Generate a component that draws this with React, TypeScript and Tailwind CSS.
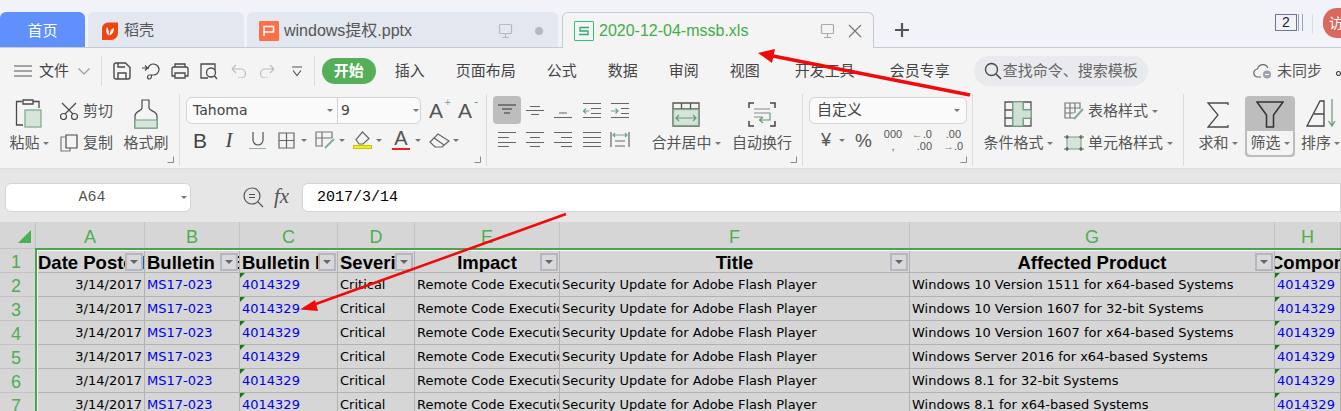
import type { ReactNode } from 'react';

const CJK = 'font-["Liberation_Sans","Noto_Sans_CJK_SC",sans-serif]';

function Ico({ w = 18, h = 18, children, className = '' }: { w?: number; h?: number; children: ReactNode; className?: string }) {
  return (
    <svg width={w} height={h} viewBox={`0 0 ${w} ${h}`} fill="none" stroke="#4a4a4a" strokeWidth="1.2" className={`shrink-0 ${className}`}>
      {children}
    </svg>
  );
}

function Caret({ className = '' }: { className?: string }) {
  return <span className={`inline-block shrink-0 w-0 h-0 border-x-[3.5px] border-x-transparent border-t-[3.5px] border-t-[#777] ${className}`} />;
}

function Sep() {
  return <div className="w-px self-stretch bg-[#dcdcdc] shrink-0" />;
}

function Corner({ right = 5 }: { right?: number }) {
  return (
    <svg width="7" height="7" viewBox="0 0 7 7" fill="none" stroke="#888" className="absolute bottom-[3px]" style={{ right }}>
      <path d="M0.5 6.5H6.5V0.5" />
    </svg>
  );
}

// big ribbon button: icon on top, label below
function BigTool({ icon, label, caret, className = '' }: { icon: ReactNode; label: string; caret?: boolean; className?: string }) {
  return (
    <div className={`shrink-0 flex flex-col items-center ${className}`}>
      <div className="h-[32px] pt-[2px] flex justify-center">{icon}</div>
      <div className="h-[28px] flex items-center gap-[3px] whitespace-nowrap">
        {label}
        {caret && <Caret />}
      </div>
    </div>
  );
}

function Tabs() {
  return (
    <div className="h-[48px] shrink-0 bg-[#f2f3f8] border-b border-[#c6c9d6] flex items-end pt-3 relative">
      <div className="w-[85px] h-[35px] pt-[3px] bg-[#5f90fb] rounded-t-md text-white text-[15px] flex items-center justify-center">首页</div>
      <div className="ml-[3px] w-[156px] h-[35px] pt-[2px] bg-[#e3e7f0] rounded-t-md flex items-center pl-[14px] gap-[6px]">
        <svg width="16" height="18" viewBox="0 0 16 18" className="shrink-0">
          <path d="M6 0.5H16V11a7 7 0 0 1-7 7H0V6.500a6 6 0 0 1 6-6Z" fill="#f0450f" />
          <path d="M5 5c-1.500 3.500-1 6.500 1.500 8.500C7.500 10 6.500 8 5 5ZM12 6c-3 1-4.500 4-4.500 7.500C10 12.500 12 10 12 6Z" fill="#fff" />
        </svg>
        <span className="text-[15px] text-[#555]">稻壳</span>
      </div>
      <div className="ml-[3px] w-[311px] h-[35px] pt-[2px] bg-[#e3e7f0] rounded-t-md flex items-center pl-[12px]">
        <div className="w-5 h-5 bg-[#fb7049] rounded-[1px] flex items-center justify-center">
          <svg width="12" height="12" viewBox="0 0 12 12" fill="none" stroke="#fff" strokeWidth="1.500">
            <path d="M1 11V1.500H10.500V7H1" />
          </svg>
        </div>
        <span className="ml-[5px] text-[16px] text-[#555] grow">windows提权.pptx</span>
        <Ico w={16} h={16} className="mr-[21px]">
          <rect x="1.500" y="1.500" width="12" height="9" rx="1" stroke="#b5b8c0" />
          <path d="M7.500 10.500V14M4 14.500H11" stroke="#b5b8c0" />
        </Ico>
        <span className="w-2 h-2 rounded-full bg-[#b5b8c0] mr-[15px]" />
      </div>
      <div className="ml-[4px] w-[312px] h-[36px] pt-[1px] -mb-px bg-[#f4f4f4] border border-b-0 border-[#c6c9d6] rounded-t-md flex items-center pl-[11px]">
        <div className="w-5 h-5 border-[1.500px] border-[#2fbf7f] rounded-[1px] flex items-center justify-center">
          <svg width="12" height="12" viewBox="0 0 12 12" fill="none" stroke="#2fa870" strokeWidth="1.300">
            <path d="M11 2.500H2V6H10V9.500H1" />
          </svg>
        </div>
        <span className="ml-[5px] text-[16px] text-[#3fae49] grow">2020-12-04-mssb.xls</span>
        <Ico w={16} h={16} className="mr-[12px]">
          <rect x="1.500" y="1.500" width="12" height="9" rx="1" stroke="#a8abb2" />
          <path d="M7.500 10.500V14M4 14.500H11" stroke="#a8abb2" />
        </Ico>
        <Ico w={14} h={14} className="mr-[11px]">
          <path d="M1 1L13 13M13 1L1 13" stroke="#777" />
        </Ico>
      </div>
      <div className="ml-[20px] h-[35px] flex items-center">
        <svg width="16" height="16" viewBox="0 0 16 16" stroke="#555" strokeWidth="2.200">
          <path d="M8 1V15M1 8H15" />
        </svg>
      </div>
      <div className="grow" />
      <div className="h-[35px] flex items-start -mt-3 self-start pt-[14px]">
        <div className="w-[22px] h-[17px] border-[1.500px] border-[#6a7690] text-[14px] leading-[14px] text-center text-[#222]">2</div>
        <div className="ml-px w-[5px] h-[17px] border-x border-[#9aa3b5]" />
        <div className="ml-[9px] w-px h-[20px] bg-[#dcdde3]" />
      </div>
      <div className="ml-[10px] w-[18px] h-[30px] bg-[#d9685d] rounded-l-[14px] text-white text-[14px] flex items-center pl-[6px] overflow-hidden self-start -mt-[4px] whitespace-nowrap">访</div>
    </div>
  );
}

function MenuRow() {
  const items: [string, number][] = [
    ['插入', 19],
    ['页面布局', 31],
    ['公式', 31],
    ['数据', 31],
    ['审阅', 31],
    ['视图', 31],
    ['开发工具', 35],
    ['会员专享', 35],
  ];
  return (
    <div className="h-[46px] shrink-0 flex items-center text-[15px] text-[#444] whitespace-nowrap">
      <Ico w={18} h={12} className="ml-[14px]">
        <path d="M0 1H18M0 6H18M0 11H18" stroke="#555" />
      </Ico>
      <span className="ml-[7px] w-[30px]">文件</span>
      <Ico w={12} h={7} className="ml-[9px]">
        <path d="M0.500 0.500L6 6L11.500 0.500" stroke="#999" />
      </Ico>
      <div className="ml-[11px] w-px h-[30px] bg-[#dcdcdc]" />
      <Ico w={18} h={18} className="ml-[11px]">
        <path d="M1 3a2 2 0 0 1 2-2h9.500L17 5.500V15a2 2 0 0 1-2 2H3a2 2 0 0 1-2-2Z M5 17V11H13V17 M5 1V5H12" strokeWidth="1.400" />
      </Ico>
      <Ico w={18} h={18} className="ml-[11px]">
        <path d="M0 6H5M3 3.500L5.500 6L3 8.500M6 7a5.500 5.500 0 1 1 5 6H7.500a2 2 0 1 0 0 4c2 0 2-2 2-4" />
      </Ico>
      <Ico w={18} h={16} className="ml-[11px]">
        <path d="M4 4V1H14V4M4 13H1V6a2 2 0 0 1 2-2H15a2 2 0 0 1 2 2V13H14M4 10H14V15H4Z" strokeWidth="1.300" />
      </Ico>
      <Ico w={20} h={17} className="ml-[11px]">
        <path d="M8 15H1V1H15V7M17 16L14.500 13" strokeWidth="1.300" />
        <circle cx="11" cy="9.500" r="4.500" strokeWidth="1.300" />
      </Ico>
      <Ico w={16} h={14} className="ml-[11px]">
        <path d="M1 5H10a4.500 4.500 0 0 1 0 9H7M1 5L5 1M1 5L5 9" stroke="#bdbdbd" />
      </Ico>
      <Ico w={16} h={14} className="ml-[12px]">
        <path d="M15 5H6a4.500 4.500 0 0 0 0 9H9M15 5L11 1M15 5L11 9" stroke="#bdbdbd" />
      </Ico>
      <Ico w={10} h={11} className="ml-[17px]">
        <path d="M0 1H10M1 4.500L5 9.500L9 4.500" stroke="#555" />
      </Ico>
      <div className="ml-[12px] w-px h-[30px] bg-[#dcdcdc]" />
      <div className="ml-[7px] w-[54px] h-[26px] rounded-full bg-[#55ae58] text-white text-center leading-[26px] font-bold text-[15px]">开始</div>
      {items.map(([label, gap]) => (
        <span key={label} style={{ marginLeft: gap }}>
          {label}
        </span>
      ))}
      <div className="ml-[24px] w-[175px] h-[30px] rounded-full bg-[#e8eaed] flex items-center pl-[10px] gap-[1px] text-[#666]">
        <Ico w={18} h={18}>
          <circle cx="7.500" cy="7.500" r="6" strokeWidth="1.400" />
          <path d="M12 12L17 17" strokeWidth="1.600" />
        </Ico>
        <span>查找命令、搜索模板</span>
      </div>
      <Ico w={20} h={16} className="ml-[105px]">
        <path d="M8 14H5a4 4 0 0 1-.5-8A5.500 5.500 0 0 1 15 5" stroke="#666" />
        <circle cx="14" cy="11.500" r="4" fill="#9aa0ab" stroke="none" />
        <path d="M12 11.500H16" stroke="#fff" />
      </Ico>
      <span className="ml-[4px] text-[#555]">未同步</span>
      <Ico w={5} h={5} className="ml-[14px] mt-[4px]">
        <circle cx="2.500" cy="2.500" r="2" />
      </Ico>
    </div>
  );
}

function Clipboard() {
  return (
    <div className="relative w-[179px] shrink-0 pt-[3px] pl-[5px] flex">
      <BigTool
        className="w-[48px]"
        caret
        label="粘贴"
        icon={
          <Ico w={28} h={29}>
            <path d="M7 2.500H1.500V26H8" strokeWidth="1.300" />
            <path d="M8 1H18V5H8ZM18 2.500H24V9" strokeWidth="1.300" />
            <rect x="10" y="11" width="16" height="17" fill="#d6e3da" stroke="#7fae8f" strokeWidth="1.300" />
          </Ico>
        }
      />
      <div className="ml-[7px] w-[53px] shrink-0 flex flex-col gap-[4px]">
        <div className="flex items-center gap-[5px] h-[28px]">
          <Ico w={18} h={18}>
            <circle cx="3.500" cy="14.500" r="3" />
            <circle cx="14.500" cy="14.500" r="3" />
            <path d="M5 12L16 1M13 12L2 1" />
          </Ico>
          剪切
        </div>
        <div className="flex items-center gap-[5px] h-[28px]">
          <Ico w={18} h={18}>
            <path d="M5 3H1V17H10V14" stroke="#777" />
            <path d="M6 1H17V14H6Z" />
          </Ico>
          复制
        </div>
      </div>
      <BigTool
        className="ml-[8px] w-[50px]"
        label="格式刷"
        icon={
          <Ico w={24} h={30}>
            <path d="M8 1H15V9C15 12 23 12 23 17V29H1V17C1 12 8 12 8 9Z" />
            <rect x="1" y="21" width="22" height="8" fill="#d8e5dc" stroke="#7fae8f" />
          </Ico>
        }
      />
      <Corner />
    </div>
  );
}

function FontGroup() {
  return (
    <div className="relative w-[306px] shrink-0 pt-[3px] pl-[6px] flex flex-col">
      <div className="flex items-center h-[27px]">
        <div className="w-[235px] h-[27px] border border-[#d4d4d4] rounded-md bg-[#fafafa] flex items-center text-[#444] font-['DejaVu_Sans'] text-[14px]">
          <span className="pl-[6px] w-[140px]">Tahoma</span>
          <Caret />
          <span className="ml-[4px] border-l border-[#d4d4d4] h-full pl-[3px] w-[76px] leading-[25px]">9</span>
          <Caret />
        </div>
        <span className="ml-[8px] relative text-[21px] text-[#555] font-['Liberation_Sans'] leading-none">
          A<span className="absolute -right-[8px] -top-[3px] text-[11px] text-[#7fae8f]">+</span>
        </span>
        <span className="ml-[15px] relative text-[21px] text-[#555] font-['Liberation_Sans'] leading-none">
          A<span className="absolute -right-[6px] -top-[4px] text-[11px] text-[#777]">-</span>
        </span>
      </div>
      <div className="flex items-center h-[28px] mt-[2px] text-[#444]">
        <span className="ml-[7px] w-[14px] text-[21px] font-['Liberation_Sans'] text-center leading-none">B</span>
        <span className="ml-[16px] w-[12px] text-[21px] font-['Liberation_Serif'] italic text-center leading-none">I</span>
        <div className="ml-[14px] w-[17px] flex flex-col items-center">
          <svg width="14" height="14" viewBox="0 0 14 14" fill="none" stroke="#555" strokeWidth="1.200">
            <path d="M2 0V8a5 5 0 0 0 10 0V0" />
          </svg>
          <div className="w-[17px] h-px bg-[#8db49a] mt-[2px]" />
        </div>
        <Ico w={17} h={17} className="ml-[12px]">
          <path d="M1 1H16V16H1ZM8.500 1V16M1 8.500H16" stroke="#666" />
        </Ico>
        <Caret className="ml-[6px]" />
        <Ico w={20} h={18} className="ml-[8px]">
          <path d="M17 7V1H1V15H8M1 7H17M7 1V15" stroke="#777" />
          <path d="M11 16L19 8M11 16L10 17" stroke="#7fae8f" strokeWidth="1.800" />
        </Ico>
        <Caret className="ml-[4px]" />
        <div className="ml-[8px] w-[19px] flex flex-col items-center">
          <Ico w={17} h={14}>
            <path d="M8.500 1L15 7.500L9 13H5L2 8.500Z" stroke="#666" />
          </Ico>
          <div className="w-[19px] h-[4px] bg-[#f5ee1e] border border-[#ccc400]" />
        </div>
        <Caret className="ml-[4px]" />
        <div className="ml-[10px] w-[18px] flex flex-col items-center">
          <span className="text-[20px] leading-[17px] font-['Liberation_Sans'] text-[#555]">A</span>
          <div className="w-[18px] h-[2px] bg-[#ee1c25] mt-px" />
        </div>
        <Caret className="ml-[5px]" />
        <Ico w={21} h={15} className="ml-[8px]">
          <path d="M1 9L9 1L20 8L13 14H6ZM5 5L15 12" stroke="#666" />
        </Ico>
        <Caret className="ml-[3px]" />
      </div>
      <Corner />
    </div>
  );
}

function AlignIcon({ pat, arrow, color = '#666' }: { pat: string; arrow?: string; color?: string }) {
  return (
    <div className="flex items-center justify-center">
      <Ico w={20} h={17}>
        <path d={pat} stroke={color} />
        {arrow && <path d={arrow} stroke="#6fa583" />}
      </Ico>
    </div>
  );
}

function AlignGroup() {
  return (
    <div className="relative w-[315px] shrink-0 pl-[6px] pt-[2px] flex text-[#555]">
      <div className="w-[141px] shrink-0 grid grid-cols-[repeat(5,28.2px)] grid-rows-[28px_31px] h-[59px]">
        <div className="rounded bg-[#bdbdbd] flex items-center justify-center">
          <Ico w={20} h={12}>
            <path d="M1 1H19M5 5H15M7 9H13" stroke="#333" />
          </Ico>
        </div>
        <AlignIcon pat="M1 8.500H19M5 4.500H15M6 12.500H14" />
        <AlignIcon pat="M1 15.500H19M6 11H14" />
        <AlignIcon pat="M1 1.500H19M9 6.500H19M9 11.500H19M1 15.500H19" arrow="M1 9H7M4 6.500L1.500 9L4 11.500" />
        <AlignIcon pat="M1 1.500H19M11 6.500H19M11 11.500H19M1 15.500H19" arrow="M1 9H8M5.500 6.500L8 9L5.500 11.500" />
        <AlignIcon pat="M1 1.500H19M1 6.500H12M1 11.500H19M1 15.500H12" />
        <AlignIcon pat="M1 1.500H19M5 6.500H15M1 11.500H19M5 15.500H15" />
        <AlignIcon pat="M1 1.500H19M8 6.500H19M1 11.500H19M8 15.500H19" />
        <AlignIcon pat="M1 1.500H19M1 6.500H19M1 11.500H19M1 15.500H19" />
        <AlignIcon pat="M1 1V16M19 1V16M5 10H15M5 15H15" arrow="M3 4H17M5 2L3 4L5 6M15 2L17 4L15 6" />
      </div>
      <div className="flex mt-px">
        <BigTool
          className="ml-[14px] w-[76px]"
          caret
          label="合并居中"
          icon={
            <Ico w={28} h={25} className="mt-[3px]">
              <path d="M1 1H27V24H1ZM1 7H27M9.500 1V7M18.500 1V7" stroke="#555" strokeWidth="1.300" />
              <rect x="1.500" y="7.500" width="25" height="16" fill="#d6e3da" stroke="#7fae8f" />
              <path d="M4 16H24M7 13L4 16L7 19M21 13L24 16L21 19" stroke="#5f9a72" />
            </Ico>
          }
        />
        <BigTool
          className="w-[76px]"
          label="自动换行"
          icon={
            <Ico w={28} h={25} className="mt-[3px]">
              <path d="M6 1H1V6M22 1H27V6M1 19V24H6M27 19V24H22" stroke="#444" strokeWidth="1.500" />
              <path d="M6 7H22M6 11H22M6 15H14" stroke="#888" />
              <path d="M22 11V18H12M15 15L11.500 18L15 21" stroke="#5f9a72" />
            </Ico>
          }
        />
      </div>
      <Corner />
    </div>
  );
}

function NumberGroup() {
  return (
    <div className="relative w-[169px] shrink-0 pt-[3px] pl-[6px] flex flex-col text-[#555]">
      <div className="w-[158px] h-[27px] border border-[#d4d4d4] rounded-md bg-[#fafafa] flex items-center justify-between pl-[7px] pr-[6px] text-[15px] text-[#444]">
        自定义
        <Caret />
      </div>
      <div className="flex items-center h-[30px] mt-[1px]">
        <span className="ml-[8px] w-[18px] text-center text-[18px] leading-none">¥</span>
        <Caret className="ml-[4px]" />
        <span className="ml-[10px] w-[17px] text-center text-[19px] leading-none">%</span>
        <span className="ml-[11px] w-[20px] text-[11px] leading-[12px] text-center">
          000
          <br />,
        </span>
        <span className="ml-[8px] w-[21px] text-[11px] leading-[12px] text-right">
          <span className="text-[#5f9a72]">←</span>.0
          <br />
          .00
        </span>
        <span className="ml-[11px] w-[18px] text-[11px] leading-[12px] text-right">
          .00
          <br />
          <span className="text-[#5f9a72]">→</span>.0
        </span>
      </div>
      <Corner />
    </div>
  );
}

function StyleGroup() {
  return (
    <div className="w-[210px] shrink-0 pl-[6px] pt-[3px] flex text-[#555] whitespace-nowrap">
      <BigTool
        className="w-[78px]"
        caret
        label="条件格式"
        icon={
          <Ico w={28} h={26} className="mt-[2px]">
            <path d="M1 1H27V25H1ZM1 9H27M1 17H27M9 1V25M19 1V25" stroke="#555" strokeWidth="1.300" />
            <path d="M9 1H19V9H27V17H19V25H9V9Z" fill="#cfe0d4" stroke="#7fae8f" />
          </Ico>
        }
      />
      <div className="ml-[7px] flex flex-col gap-[4px]">
        <div className="h-[28px] flex items-center gap-[4px]">
          <Ico w={20} h={18}>
            <path d="M10 16H1V1H16V7M1 6H16M1 11H10M6 1V16M11 1V11" stroke="#777" />
            <path d="M10 17L19 7" stroke="#7fae8f" strokeWidth="2" />
          </Ico>
          <span>表格样式</span>
          <Caret />
        </div>
        <div className="h-[28px] flex items-center gap-[4px]">
          <Ico w={20} h={18}>
            <rect x="3" y="3" width="14" height="12" fill="#d6e3da" stroke="#7fae8f" />
            <path d="M0 3H5M3 1V5M15 3H20M17 1V5M0 15H5M3 13V17M15 15H20M17 13V17" stroke="#555" />
          </Ico>
          <span>单元格样式</span>
          <Caret />
        </div>
      </div>
    </div>
  );
}

function SumGroup() {
  return (
    <div className="pt-[3px] pl-[9px] flex text-[#555] whitespace-nowrap">
      <BigTool
        className="w-[50px]"
        caret
        label="求和"
        icon={
          <Ico w={22} h={26} className="mt-[3px]">
            <path d="M21 3V1H1L11 13L1 25H21V23" strokeWidth="1.300" />
          </Ico>
        }
      />
      <div className="ml-[2px] w-[50px] h-[61px] -mt-px rounded bg-[#bdbdbd] border-2 border-[#bdbdbd] flex flex-col items-center">
        <Ico w={28} h={28} className="mt-[3px]">
          <path d="M1 1H27L17.500 14V26H10.500V14Z" stroke="#333" strokeWidth="1.500" />
        </Ico>
        <div className="mt-[2px] bg-[#f4f4f4] w-full h-[24px] rounded-b-sm flex items-center justify-center gap-[3px]">
          筛选
          <Caret />
        </div>
      </div>
      <div className="ml-[6px] flex flex-col items-start">
        <div className="h-[32px] pt-[2px] pl-[5px]">
          <Ico w={30} h={28}>
            <path d="M1 27L14 2H18V27H1ZM8 15H18" stroke="#444" strokeWidth="1.300" />
            <path d="M26 0V27M22.500 22L26 27L29 22" stroke="#5f9a72" />
          </Ico>
        </div>
        <div className="h-[28px] flex items-center gap-[3px]">
          排序
          <Caret />
        </div>
      </div>
    </div>
  );
}

function Ribbon() {
  return (
    <div className="h-[74px] shrink-0 flex pb-[2px] overflow-hidden text-[15px] text-[#555]">
      <Clipboard />
      <Sep />
      <FontGroup />
      <Sep />
      <AlignGroup />
      <Sep />
      <NumberGroup />
      <Sep />
      <StyleGroup />
      <Sep />
      <SumGroup />
    </div>
  );
}

function FormulaBar() {
  return (
    <div className="h-[54px] shrink-0 bg-[#e6e6e6] border-t border-[#dedede] flex items-center pt-[3px]">
      <div className="ml-[5px] w-[186px] h-[29px] bg-white border border-[#d4d4d4] rounded-md flex items-center text-[15px] text-[#555]">
        <span className="grow text-center pr-[3px] pt-[3px] font-['Liberation_Mono']">A64</span>
        <Caret className="mr-[3px]" />
      </div>
      <Ico w={21} h={21} className="ml-[52px]">
        <circle cx="9" cy="9" r="8" stroke="#555" />
        <path d="M15 15L20 20M6 7.500H12M6 10.500H12" stroke="#555" />
      </Ico>
      <span className="ml-[10px] w-[20px] font-['Liberation_Serif'] italic text-[21px] text-[#555]">fx</span>
      <div className="ml-[8px] grow h-[29px] bg-white border border-[#d4d4d4] rounded-l-md flex items-center pl-[14px] pt-[3px] text-[15px] text-black font-['Liberation_Mono']">
        2017/3/14
      </div>
    </div>
  );
}

const COLS = ['A', 'B', 'C', 'D', 'E', 'F', 'G', 'H'];
const HEADERS = ['Date Posted', 'Bulletin KB', 'Bulletin ID', 'Severity', 'Impact', 'Title', 'Affected Product', 'Component'];
const PRODUCTS = [
  'Windows 10 Version 1511 for x64-based Systems',
  'Windows 10 Version 1607 for 32-bit Systems',
  'Windows 10 Version 1607 for x64-based Systems',
  'Windows Server 2016 for x64-based Systems',
  'Windows 8.1 for 32-bit Systems',
  'Windows 8.1 for x64-based Systems',
];

function FilterBtn() {
  return (
    <span className="absolute right-px top-[4px] w-[18px] h-[18px] bg-[#d8d8d8] border-2 border-[#b6b6c0] flex items-center justify-center">
      <span className="w-0 h-0 border-x-[4px] border-x-transparent border-t-[4px] border-t-[#666]" />
    </span>
  );
}

function Cell({ children, className = '' }: { children?: ReactNode; className?: string }) {
  return <div className={`relative overflow-hidden whitespace-nowrap border-r border-b border-[#b2b2b2] px-[2px] ${className}`}>{children}</div>;
}

function LinkCell() {
  return (
    <Cell className="text-[#0000ee] leading-[23px]">
      <span className="absolute left-0 top-0 w-0 h-0 border-r-[5px] border-r-transparent border-t-[5px] border-t-[#147a14]" />
      4014329
    </Cell>
  );
}

function RowNum({ n }: { n: number }) {
  return <div className="border-r border-b border-[#c4c4c4] pr-[3px] text-center text-[#4caf50] text-[18px] font-['Liberation_Sans'] leading-[26px]">{n}</div>;
}

function Sheet() {
  return (
    <div className="relative overflow-hidden h-[189px] bg-[#d6d6d6] font-['DejaVu_Sans'] text-[13px] text-black grid grid-cols-[36px_109px_95px_98px_77px_145px_350px_365px_66px] grid-rows-[27px_repeat(7,24px)]">
      <div className="border-r border-b border-[#c4c4c4] flex items-end justify-end pr-[4px] pb-[5px]">
        <span className="w-0 h-0 border-l-[13px] border-l-transparent border-b-[13px] border-b-[#4caf50]" />
      </div>
      {COLS.map((c) => (
        <div key={c} className="border-r border-[#c4c4c4] text-center text-[#4caf50] text-[18px] leading-[30px] font-['Liberation_Sans']">
          {c}
        </div>
      ))}
      <RowNum n={1} />
      {HEADERS.map((h, i) => (
        <Cell key={h} className={`font-['Liberation_Sans'] font-bold text-[18.5px] leading-[27px] ${i >= 4 && i < 7 ? 'text-center' : ''} ${i === 7 ? 'pl-0' : ''}`}>
          {i === 7 ? <span className="-ml-[5px]">{h}</span> : h}
          {i < 7 && <FilterBtn />}
        </Cell>
      ))}
      {PRODUCTS.map((p, i) => (
        <div key={p} className="contents leading-[23px]">
          <RowNum n={i + 2} />
          <Cell className="text-right leading-[23px]">3/14/2017</Cell>
          <Cell className="text-[#0000ee] leading-[23px]">MS17-023</Cell>
          <LinkCell />
          <Cell className="leading-[23px]">Critical</Cell>
          <Cell className="leading-[23px]">Remote Code Execution</Cell>
          <Cell className="leading-[23px]">Security Update for Adobe Flash Player</Cell>
          <Cell className="leading-[23px]">{p}</Cell>
          <LinkCell />
        </div>
      ))}
      {/* selection outline sits on top of the cells */}
      <div className="absolute left-[35px] top-[26px] right-[-4px] bottom-[-4px] border-2 border-[#4aa44e] pointer-events-none" />
      <div className="absolute left-[37px] top-[28px] right-0 h-px bg-white pointer-events-none" />
      <div className="absolute left-[37px] top-[28px] bottom-0 w-px bg-white pointer-events-none" />
    </div>
  );
}

export default function App() {
  return (
    <div className={`relative w-[1341px] h-[411px] overflow-hidden flex flex-col bg-[#f4f4f4] ${CJK}`}>
      <Tabs />
      <MenuRow />
      <Ribbon />
      <FormulaBar />
      <Sheet />
      <svg width="1341" height="411" className="absolute inset-0 pointer-events-none" fill="#f00a0a" stroke="#f00a0a">
        <path d="M970 95L773 56" strokeWidth="3.500" />
        <path d="M758 53L775 49L772 63Z" stroke="none" />
        <path d="M566 214L313 305" strokeWidth="2.500" />
        <path d="M300 309.500L315 300L318 311Z" stroke="none" />
      </svg>
    </div>
  );
}
